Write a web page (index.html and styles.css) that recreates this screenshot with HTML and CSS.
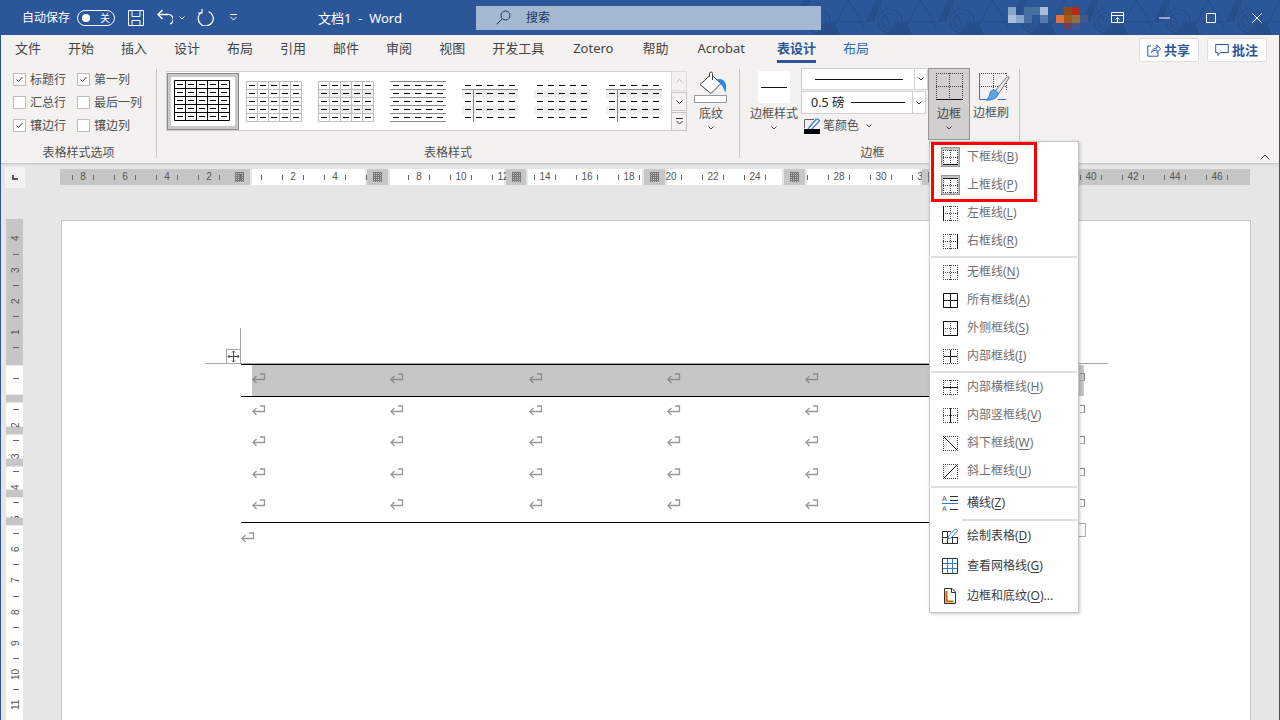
FILE: index.html
```html
<!DOCTYPE html>
<html lang="zh-CN">
<head>
<meta charset="utf-8">
<title>文档1 - Word</title>
<link rel="stylesheet" href="styles.css">
</head>
<body>
<svg class="defs" aria-hidden="true">
  <defs>
    <path id="b-rect" class="dots" d="M0 .5H15M0 14.5H15M.5 0V15M14.5 0V15"/>
    <path id="b-base" class="dots" d="M0 .5H15M0 14.5H15M0 7.5H15M.5 0V15M14.5 0V15M7.5 0V15"/>
    <path id="b-big" class="dots" d="M0 .5H27M0 13.5H27M.5 0V27M13.5 0V27M26.5 0V27"/>
    <path id="t-dash" class="t-dash" d="M3 4.5H55M3 12.5H55M3 20.5H55M3 28.5H55M3 36.5H55"/>
    <path id="t-grid" d="M.5 .5H55.5V40.5H.5ZM11.5 0V41M22.5 0V41M33.5 0V41M44.5 0V41M0 8.5H56M0 16.5H56M0 24.5H56M0 32.5H56"/>
    <path id="t-band" class="t-band" d="M0 8.5H56V16.5H0ZM0 24.5H56V32.5H0Z"/>
    <g id="ret"><path d="M8 1H12.5V6.5H1"/><path d="M4.5 3L1 6.5L4.5 10"/></g>
    <path id="chev" d="M.5 .5L3 3L5.5 .5"/>
    <pattern id="tile" width="72" height="35" patternUnits="userSpaceOnUse">
      <path class="pat-f" d="M14 0H20L13 22H3ZM34 22H44L50 35H26Z"/>
      <circle class="pat-l" cx="28" cy="21" r="8"/>
      <circle class="pat-l" cx="28" cy="21" r="12"/>
      <path class="pat-l" d="M14 0L34 35M58 0L40 35M44 22H72M0 22H3M58 0L72 22M3 22L-4 35"/>
    </pattern>
  </defs>
</svg>

<div class="app">
  <header class="titlebar">
    <svg class="pattern"><rect width="510" height="35" fill="url(#tile)"/></svg>
    <span class="autosave">自动保存</span>
    <span class="toggle"><i class="knob"></i><span class="toggle-t">关</span></span>
    <svg class="ti i-save" viewBox="0 0 16 16"><path d="M.5 .5H15.5V15.5H.5ZM4 .5V6.5H12V.5M4 15.5V10.5H12V15.5"/></svg>
    <svg class="ti i-undo" viewBox="0 0 16 17"><path d="M5.5 1L1 5.5L5.5 10M1 5.5H10A5 5 0 0 1 13 15"/></svg>
    <svg class="ti i-chev1" viewBox="0 0 6 4"><use href="#chev"/></svg>
    <svg class="ti i-redo" viewBox="0 0 17 17"><path d="M5 3A7.5 7.5 0 1 0 11.5 2.500M5 0V4H1"/></svg>
    <svg class="ti i-cust" viewBox="0 0 7 7"><path d="M0 .5H7M.5 3L3.5 6L6.5 3"/></svg>
    <span class="doc-title">文档1  -  Word</span>
    <div class="search">
      <svg class="i-search" viewBox="0 0 15 15"><circle cx="9.5" cy="5.5" r="4.5"/><path d="M6 9L.8 14.2"/></svg>
      <span>搜索</span>
    </div>
    <svg class="mosaic" viewBox="0 0 80 22">
      <rect class="m1" x="0" y="0" width="8" height="8"/><rect class="m2" x="16" y="0" width="16" height="8"/><rect class="m3" x="32" y="0" width="8" height="8"/>
      <rect class="m3" x="0" y="8" width="8" height="8"/><rect class="m1" x="8" y="8" width="8" height="8"/><rect class="m2" x="16" y="8" width="8" height="8"/><rect class="m4" x="32" y="8" width="8" height="8"/>
      <rect class="m5" x="56" y="0" width="8" height="8"/><rect class="m6" x="64" y="0" width="8" height="8"/>
      <rect class="m7" x="48" y="8" width="8" height="8"/><rect class="m8" x="56" y="8" width="8" height="8"/><rect class="m9" x="64" y="8" width="8" height="8"/><rect class="m10" x="72" y="8" width="8" height="8"/>
      <rect class="m11" x="56" y="16" width="8" height="6"/><rect class="m10" x="64" y="16" width="8" height="6"/>
    </svg>
    <svg class="ti i-ropt" viewBox="0 0 14 12"><path d="M.5 .5H12.5V10.5H.5ZM.5 3.5H12.5M6.5 10V5.5M4.5 7.5L6.5 5.5L8.5 7.5"/></svg>
    <svg class="ti i-min" viewBox="0 0 11 2"><path d="M0 1H11"/></svg>
    <svg class="ti i-max" viewBox="0 0 10 10"><path d="M.5 .5H9.5V9.5H.5Z"/></svg>
    <svg class="ti i-close" viewBox="0 0 10 10"><path d="M.3 .3L9.7 9.7M9.7 .3L.3 9.7"/></svg>
  </header>

  <section class="ribbon">
    <nav class="tabs">
      <span>文件</span><span>开始</span><span>插入</span><span>设计</span><span>布局</span><span>引用</span><span>邮件</span><span>审阅</span><span>视图</span><span>开发工具</span><span class="tab-l">Zotero</span><span>帮助</span><span class="tab-l">Acrobat</span><span class="tab-on">表设计</span><span class="tab-ctx">布局</span>
      <div class="shares">
        <button class="share"><svg viewBox="0 0 14 14"><path d="M4 3H.8V13.2H11V9M4.5 9.5C5 6.5 7 5 10 5V2L13.5 5.8L10 9.5V7C8 7 6 7.5 4.5 9.5Z"/></svg>共享</button>
        <button class="share"><svg viewBox="0 0 14 14"><path d="M.7 1.5H13.3V9.5H5.5L3 12.5V9.5H.7Z"/></svg>批注</button>
      </div>
    </nav>

    <div class="rbody">
      <div class="group g-opts">
        <div class="opts">
          <label class="opt"><i class="cb"><svg viewBox="0 0 11 11"><path d="M2.5 5.5L4.5 7.5L8.5 3"/></svg></i>标题行</label>
          <label class="opt"><i class="cb"><svg viewBox="0 0 11 11"><path d="M2.5 5.5L4.5 7.5L8.5 3"/></svg></i>第一列</label>
          <label class="opt"><i class="cb"></i>汇总行</label>
          <label class="opt"><i class="cb"></i>最后一列</label>
          <label class="opt"><i class="cb"><svg viewBox="0 0 11 11"><path d="M2.5 5.5L4.5 7.5L8.5 3"/></svg></i>镶边行</label>
          <label class="opt"><i class="cb"></i>镶边列</label>
        </div>
        <div class="glabel">表格样式选项</div>
      </div>
      <i class="sep"></i>

      <div class="group g-styles">
        <div class="gbody">
          <div class="gallery">
            <div class="thumbs">
              <div class="thumb sel"><svg viewBox="0 0 56 41"><use href="#t-grid" class="tk"/><use href="#t-dash"/></svg></div>
              <div class="thumb"><svg viewBox="0 0 56 41"><use href="#t-grid" class="tg"/><use href="#t-dash"/></svg></div>
              <div class="thumb"><svg viewBox="0 0 56 41"><use href="#t-band"/><use href="#t-grid" class="tg"/><use href="#t-dash"/></svg></div>
              <div class="thumb"><svg viewBox="0 0 56 41"><path class="tl" d="M0 .5H56M0 8.5H56M0 16.5H56M0 24.5H56M0 32.5H56M0 40.5H56"/><use href="#t-dash"/></svg></div>
              <div class="thumb"><svg viewBox="0 0 56 41"><use href="#t-band"/><path class="tl" d="M0 8.5H56M11.5 8V41"/><use href="#t-dash"/></svg></div>
              <div class="thumb"><svg viewBox="0 0 56 41"><use href="#t-band"/><use href="#t-dash"/></svg></div>
              <div class="thumb"><svg viewBox="0 0 56 41"><use href="#t-band"/><path class="tl" d="M0 8.5H56M11.5 8V41"/><use href="#t-dash"/></svg></div>
            </div>
            <div class="gscroll">
              <span class="gs gs-up"><svg viewBox="0 0 7 4"><path d="M.5 3.5L3.5 .5L6.5 3.5"/></svg></span>
              <span class="gs gs-mid"><svg viewBox="0 0 7 4"><path d="M.5 .5L3.5 3.5L6.5 .5"/></svg></span>
              <span class="gs gs-low"><svg viewBox="0 0 7 7"><path d="M0 .5H7M.5 3L3.5 6L6.5 3"/></svg></span>
            </div>
          </div>
          <div class="rbtn btn-shade">
            <svg class="i-shade" viewBox="0 0 34 33">
              <path class="bk" d="M6 13.5L17 3.5L27 12.5L17 22.5Z"/>
              <path class="bk" d="M15.5 6V2.5A1.5 1.5 0 0 1 18.5 2.5V9"/>
              <path class="dr" d="M23 8.5C27 7 29 8.5 30.5 10.5C32.5 13 32.5 17 31.5 21.5C29.5 18 29 15 27 13.5L25 11Z"/>
              <rect class="bar" x=".5" y="24.5" width="32" height="7"/>
            </svg>
            <span class="rlabel">底纹</span>
            <svg class="rchev" viewBox="0 0 6 4"><use href="#chev"/></svg>
          </div>
        </div>
        <div class="glabel">表格样式</div>
      </div>
      <i class="sep"></i>

      <div class="group g-borders">
        <div class="gbody">
          <div class="rbtn btn-bstyle">
            <span class="bsbox"><i class="bsline"></i></span>
            <span class="rlabel">边框样式</span>
            <svg class="rchev" viewBox="0 0 6 4"><use href="#chev"/></svg>
          </div>
          <div class="combos">
            <div class="combo c1"><span class="cval"><i class="cline l1"></i></span><span class="cdrop"><svg viewBox="0 0 6 4"><use href="#chev"/></svg></span></div>
            <div class="combo c2"><span class="cval"><span class="cnum">0.5 磅</span><i class="cline l2"></i></span><span class="cdrop"><svg viewBox="0 0 6 4"><use href="#chev"/></svg></span></div>
            <div class="pencolor">
              <svg class="i-pen" viewBox="0 0 16 16"><path class="pf" d="M.5 10V1.5H10"/><path class="pb" d="M5 9.5L12 1.5C13 .5 15 1.5 15.5 3L8 11L4.5 12Z"/><rect x="0" y="11" width="16" height="5"/></svg>
              <span>笔颜色</span>
              <svg class="rchev pchev" viewBox="0 0 6 4"><use href="#chev"/></svg>
            </div>
          </div>
          <div class="rbtn btn-border">
            <svg class="bigi" viewBox="0 0 27 27"><use href="#b-big"/><path class="solid" d="M0 26.5H27"/></svg>
            <span class="rlabel">边框</span>
            <svg class="rchev" viewBox="0 0 6 4"><use href="#chev"/></svg>
          </div>
          <div class="rbtn btn-brush">
            <svg class="i-brush" viewBox="0 0 31 28">
              <path class="dots" d="M2 .5H28M27.5 0V18M14.5 0V26M2 13.5H27"/>
              <path class="bl" d="M.5 0V26.5H8M19 26.5H27"/>
              <path class="hd" d="M16 18L28 4C29 3 30.5 3.500 30 5L20 20L18 21Z"/>
              <path class="br" d="M14 17C17 17 20 19.500 19 22C17 26 11 27.500 7 27C10 25.500 10.500 22 11 20C11.500 18.500 12.500 17.500 14 17Z"/>
            </svg>
            <span class="rlabel">边框刷</span>
          </div>
        </div>
        <div class="glabel glabel-b">边框</div>
      </div>
      <i class="sep"></i>
      <svg class="collapse" viewBox="0 0 10 6"><path d="M.5 5.500L5 1L9.500 5.500"/></svg>
    </div>
  </section>

  <main class="docarea">
    <div class="hrow">
      <div class="corner"><i></i></div>
      <div class="hruler">
        <div class="hbands">
          <div class="hb grey hb-190"><i class="mark-in"></i></div>
          <div class="hb white hb-113"></div>
          <div class="mark m21"></div>
          <div class="hb white hb-114"></div>
          <div class="mark m20"></div>
          <div class="hb white hb-114"></div>
          <div class="mark m21"></div>
          <div class="hb white hb-115"></div>
          <div class="mark m21"></div>
          <div class="hb white hb-113"></div>
          <div class="mark m21"></div>
          <div class="hb grey hb-rest"></div>
        </div>
        <div class="hticks">
          <span>8</span><span>6</span><span>4</span><span>2</span><span></span><span>2</span><span>4</span><span></span><span>8</span><span>10</span><span>12</span><span>14</span><span>16</span><span>18</span><span>20</span><span>22</span><span>24</span><span></span><span>28</span><span>30</span><span>32</span><span></span><span></span><span></span><span>40</span><span>42</span><span>44</span><span>46</span>
        </div>
      </div>
    </div>
    <div class="drow">
      <div class="vruler">
        <div class="vbands">
          <i class="grey v146"></i><i class="white v28"></i><i class="grey v7"></i><i class="white v23"></i><i class="grey v7"></i><i class="white v23"></i><i class="grey v7"></i><i class="white v22"></i><i class="grey v7"></i><i class="white v19"></i><i class="grey v7"></i><i class="white vrest"></i>
        </div>
        <div class="vticks">
          <span><b>4</b></span><span><b>3</b></span><span><b>2</b></span><span><b>1</b></span><span><b></b></span><span><b></b></span><span><b>2</b></span><span><b>3</b></span><span><b>4</b></span><span><b>5</b></span><span><b>6</b></span><span><b>7</b></span><span><b>8</b></span><span><b>9</b></span><span><b>10</b></span><span><b>11</b></span>
        </div>
      </div>
      <div class="page">
        <div class="tbl">
          <i class="guide-v"></i><i class="guide-h"></i>
          <span class="mover"><svg viewBox="0 0 13 13"><path d="M6.500 1V12M1 6.500H12M5 2.500L6.500 1L8 2.500M5 10.500L6.500 12L8 10.500M2.500 5L1 6.500L2.500 8M10.500 5L12 6.500L10.500 8"/></svg></span>
          <div class="row row-head"><div class="cells"><span class="cell"><svg class="ret" viewBox="0 0 14 11"><use href="#ret"/></svg></span><span class="cell"><svg class="ret" viewBox="0 0 14 11"><use href="#ret"/></svg></span><span class="cell"><svg class="ret" viewBox="0 0 14 11"><use href="#ret"/></svg></span><span class="cell"><svg class="ret" viewBox="0 0 14 11"><use href="#ret"/></svg></span><span class="cell"><svg class="ret" viewBox="0 0 14 11"><use href="#ret"/></svg></span><span class="cell"><svg class="ret" viewBox="0 0 14 11"><use href="#ret"/></svg></span><i class="rowend"></i></div></div>
          <div class="row"><div class="cells"><span class="cell"><svg class="ret" viewBox="0 0 14 11"><use href="#ret"/></svg></span><span class="cell"><svg class="ret" viewBox="0 0 14 11"><use href="#ret"/></svg></span><span class="cell"><svg class="ret" viewBox="0 0 14 11"><use href="#ret"/></svg></span><span class="cell"><svg class="ret" viewBox="0 0 14 11"><use href="#ret"/></svg></span><span class="cell"><svg class="ret" viewBox="0 0 14 11"><use href="#ret"/></svg></span><span class="cell"><svg class="ret" viewBox="0 0 14 11"><use href="#ret"/></svg></span><i class="rowend"></i></div></div>
          <div class="row"><div class="cells"><span class="cell"><svg class="ret" viewBox="0 0 14 11"><use href="#ret"/></svg></span><span class="cell"><svg class="ret" viewBox="0 0 14 11"><use href="#ret"/></svg></span><span class="cell"><svg class="ret" viewBox="0 0 14 11"><use href="#ret"/></svg></span><span class="cell"><svg class="ret" viewBox="0 0 14 11"><use href="#ret"/></svg></span><span class="cell"><svg class="ret" viewBox="0 0 14 11"><use href="#ret"/></svg></span><span class="cell"><svg class="ret" viewBox="0 0 14 11"><use href="#ret"/></svg></span><i class="rowend"></i></div></div>
          <div class="row"><div class="cells"><span class="cell"><svg class="ret" viewBox="0 0 14 11"><use href="#ret"/></svg></span><span class="cell"><svg class="ret" viewBox="0 0 14 11"><use href="#ret"/></svg></span><span class="cell"><svg class="ret" viewBox="0 0 14 11"><use href="#ret"/></svg></span><span class="cell"><svg class="ret" viewBox="0 0 14 11"><use href="#ret"/></svg></span><span class="cell"><svg class="ret" viewBox="0 0 14 11"><use href="#ret"/></svg></span><span class="cell"><svg class="ret" viewBox="0 0 14 11"><use href="#ret"/></svg></span><i class="rowend"></i></div></div>
          <div class="row"><div class="cells"><span class="cell"><svg class="ret" viewBox="0 0 14 11"><use href="#ret"/></svg></span><span class="cell"><svg class="ret" viewBox="0 0 14 11"><use href="#ret"/></svg></span><span class="cell"><svg class="ret" viewBox="0 0 14 11"><use href="#ret"/></svg></span><span class="cell"><svg class="ret" viewBox="0 0 14 11"><use href="#ret"/></svg></span><span class="cell"><svg class="ret" viewBox="0 0 14 11"><use href="#ret"/></svg></span><span class="cell"><svg class="ret" viewBox="0 0 14 11"><use href="#ret"/></svg></span><i class="rowend"></i></div></div>
          <i class="resize"></i>
        </div>
        <svg class="ret ret-after" viewBox="0 0 14 11"><use href="#ret"/></svg>
      </div>
    </div>
  </main>

  <div class="menu">
    <div class="mi"><span class="chk"><svg class="bi" viewBox="0 0 15 15"><use href="#b-base"/><path class="solid" d="M0 14.500H15"/></svg></span><span>下框线(<u>B</u>)</span></div>
    <div class="mi"><span class="chk"><svg class="bi" viewBox="0 0 15 15"><use href="#b-base"/><path class="solid" d="M0 .5H15"/></svg></span><span>上框线(<u>P</u>)</span></div>
    <div class="mi"><svg class="bi" viewBox="0 0 15 15"><use href="#b-base"/><path class="solid" d="M.5 0V15"/></svg><span>左框线(<u>L</u>)</span></div>
    <div class="mi"><svg class="bi" viewBox="0 0 15 15"><use href="#b-base"/><path class="solid" d="M14.500 0V15"/></svg><span>右框线(<u>R</u>)</span></div>
    <i class="msep"></i>
    <div class="mi"><svg class="bi" viewBox="0 0 15 15"><use href="#b-base"/></svg><span>无框线(<u>N</u>)</span></div>
    <div class="mi"><svg class="bi" viewBox="0 0 15 15"><path class="solid" d="M.5 .5H14.500V14.500H.5ZM7.500 0V15M0 7.500H15"/></svg><span>所有框线(<u>A</u>)</span></div>
    <div class="mi"><svg class="bi" viewBox="0 0 15 15"><use href="#b-base"/><path class="solid" d="M.5 .5H14.500V14.500H.5Z"/></svg><span>外侧框线(<u>S</u>)</span></div>
    <div class="mi"><svg class="bi" viewBox="0 0 15 15"><use href="#b-rect"/><path class="solid" d="M7.500 1V14M1 7.500H14"/></svg><span>内部框线(<u>I</u>)</span></div>
    <i class="msep"></i>
    <div class="mi"><svg class="bi" viewBox="0 0 15 15"><use href="#b-base"/><path class="solid" d="M1 7.500H14"/></svg><span>内部横框线(<u>H</u>)</span></div>
    <div class="mi"><svg class="bi" viewBox="0 0 15 15"><use href="#b-base"/><path class="solid" d="M7.500 1V14"/></svg><span>内部竖框线(<u>V</u>)</span></div>
    <div class="mi"><svg class="bi" viewBox="0 0 15 15"><use href="#b-rect"/><path class="solid" d="M1 1L14 14"/></svg><span>斜下框线(<u>W</u>)</span></div>
    <div class="mi"><svg class="bi" viewBox="0 0 15 15"><use href="#b-rect"/><path class="solid" d="M1 14L14 1"/></svg><span>斜上框线(<u>U</u>)</span></div>
    <i class="msep"></i>
    <div class="mi tall dark"><svg class="mic" viewBox="0 0 16 16"><text class="tiny" x="0" y="6">A</text><text class="tiny" x="0" y="16">A</text><path class="solid g3" d="M8 1.500H16M8 5.500H16M8 14.500H16"/><path class="blue" d="M0 8.500H16"/></svg><span>横线(<u>Z</u>)</span></div>
    <i class="msep short"></i>
    <div class="mi tall dark"><svg class="mic" viewBox="0 0 16 16"><path class="solid g3" d="M.5 3.500H9M.5 3.500V15.500H15.500V9M.5 9.500H15M5.500 3.500V15.500M10.500 9.500V15.500"/><path class="bfill" d="M6 9L12.500 1.500C13.500 .5 15.500 1.500 15.500 3L9 10L6 10.500Z"/></svg><span>绘制表格(<u>D</u>)</span></div>
    <div class="mi tall dark"><svg class="mic" viewBox="0 0 16 16"><path class="blue" d="M5.500 1V15M10.500 1V15M1 5.500H15M1 10.500H15"/><path class="solid g3" d="M.5 .5H15.500V15.500H.5Z"/></svg><span>查看网格线(<u>G</u>)</span></div>
    <div class="mi tall dark"><svg class="mic" viewBox="0 0 16 16"><path class="solid g3" d="M2.500 .5H10L13.500 4V15.500H2.500ZM9.500 .5V4.500H13.500"/><path class="orange" d="M4.500 3V13.500H11.500"/></svg><span>边框和底纹(<u>O</u>)...</span></div>
  </div>
  <div class="redbox"></div>
</div>
</body>
</html>
```

FILE: styles.css
```css
* { box-sizing: border-box; }
html, body { margin: 0; padding: 0; }
body {
  width: 1280px;
  height: 720px;
  overflow: hidden;
  font-family: "Noto Sans", "Noto Sans CJK SC", "Liberation Sans", sans-serif;
  color: #505050;
}
i { font-style: normal; display: block; }
.defs { position: absolute; width: 0; height: 0; }

.app {
  position: relative;
  width: 1280px;
  height: 720px;
  overflow: hidden;
  display: flex;
  flex-direction: column;
  background: #2b579a;
}

/* title bar */
.titlebar {
  position: relative;
  isolation: isolate;
  flex: none;
  height: 35px;
  display: flex;
  align-items: center;
  padding-left: 22px;
  background: #2b579a;
  color: #fff;
}
.pattern { position: absolute; left: 790px; top: 0; width: 490px; height: 35px; z-index: -1; }
.pat-f { fill: #264d8c; }
.pat-l { fill: none; stroke: #264d8c; stroke-width: 1.2; }
.autosave { font-size: 12px; line-height: 16px; width: 48px; }
.toggle {
  position: relative;
  margin-left: 7px;
  width: 38px;
  height: 16px;
  border: 1px solid #fff;
  border-radius: 8px;
  display: flex;
  align-items: center;
  padding-left: 4px;
}
.knob { width: 8px; height: 8px; border-radius: 50%; background: #fff; }
.toggle-t { margin-left: 10px; font-size: 10px; line-height: 14px; }
.ti { flex: none; fill: none; stroke: #fff; stroke-width: 1; }
.i-save { width: 16px; height: 16px; margin-left: 13px; }
.i-undo { width: 16px; height: 17px; margin-left: 13px; stroke-width: 1.3; }
.i-chev1 { width: 6px; height: 4px; margin-left: 6px; }
.i-redo { width: 17px; height: 17px; margin-left: 12px; stroke-width: 1.2; }
.i-cust { width: 7px; height: 7px; margin-left: 16px; }
.doc-title { margin-left: 81px; width: 85px; font-size: 13px; line-height: 18px; white-space: pre; }
.search {
  margin-left: 73px;
  width: 345px;
  height: 24px;
  background: #a5b8d2;
  display: flex;
  align-items: center;
  padding-left: 20px;
  gap: 15px;
  color: #1c3661;
  font-size: 12px;
  line-height: 16px;
}
.i-search { width: 15px; height: 15px; fill: none; stroke: #1c3661; stroke-width: 1; }
.mosaic { flex: none; width: 80px; height: 22px; margin-left: 187px; }
.m1 { fill: #8aa5cc; } .m2 { fill: #46709f; } .m3 { fill: #a9bedb; } .m4 { fill: #5c7ca8; }
.m5 { fill: #8b4a14; } .m6 { fill: #b52a1a; } .m7 { fill: #e0703c; } .m8 { fill: #a05a18; }
.m9 { fill: #937040; } .m10 { fill: #41568a; } .m11 { fill: #6a4060; }
.i-ropt { width: 14px; height: 12px; margin-left: 23px; }
.i-min { width: 11px; height: 2px; margin-left: 34px; }
.i-max { width: 10px; height: 10px; margin-left: 36px; }
.i-close { width: 10px; height: 10px; margin-left: 36px; }

/* ribbon */
.ribbon {
  position: relative;
  z-index: 1;
  flex: none;
  height: 128px;
  margin: 0 1px;
  background: #f3f2f1;
  box-shadow: 0 1px 2px rgba(0, 0, 0, .18);
  display: flex;
  flex-direction: column;
}
.tabs {
  flex: none;
  height: 29px;
  display: flex;
  align-items: center;
  gap: 27px;
  padding: 0 12px 0 14px;
  font-size: 13px;
  line-height: 19px;
  color: #444;
  white-space: nowrap;
}
.tabs > span { position: relative; top: -1px; }
.tab-l { padding: 0 2px; }
.tab-on { color: #2b579a; font-weight: 700; margin-left: 3px; }
.tab-on::after {
  content: "";
  position: absolute;
  left: 0;
  right: 0;
  top: 21px;
  height: 3px;
  background: #2b579a;
}
.tab-ctx { color: #2b6cb0; }
.shares { margin-left: auto; display: flex; gap: 8px; }
.share {
  width: 60px;
  height: 24px;
  padding: 0 0 0 7px;
  border: 1px solid #e1dfdd;
  border-radius: 2px;
  background: #fff;
  font: 700 13px/18px "Noto Sans CJK SC", sans-serif;
  color: #2b579a;
  display: flex;
  align-items: center;
  gap: 3px;
}
.share svg { width: 14px; height: 14px; fill: none; stroke: #2b579a; stroke-width: 1; flex: none; }

.rbody { flex: 1; display: flex; min-height: 0; }
.sep { flex: none; width: 1px; margin: 5px 0; background: #c8c6c4; }
.group { flex: none; display: flex; flex-direction: column; }
.gbody { flex: 1; display: flex; min-height: 0; }
.glabel { flex: none; height: 16px; margin-bottom: 2px; text-align: center; font-size: 12px; line-height: 16px; color: #505050; }
.glabel-b { padding-right: 14px; }

.g-opts { width: 155px; }
.opts {
  flex: 1;
  display: grid;
  grid-template-columns: 64px 1fr;
  grid-auto-rows: 23px;
  padding: 4px 0 0 12px;
}
.opt { display: flex; align-items: center; gap: 4px; font-size: 12px; line-height: 16px; white-space: nowrap; }
.cb { flex: none; width: 13px; height: 13px; border: 1px solid #bdbdbd; background: #fff; }
.cb svg { display: block; width: 11px; height: 11px; fill: none; stroke: #333; stroke-width: 1; }

.g-styles { width: 582px; }
.g-styles .gbody { padding: 7px 0 0 9px; }
.gallery { flex: none; height: 60px; width: 521px; display: flex; }
.thumbs {
  flex: none;
  width: 506px;
  height: 60px;
  padding: 1px 0 0 0;
  border: 1px solid #d2d0ce;
  background: #fff;
  display: flex;
}
.thumb { flex: none; width: 72px; height: 57px; padding: 8px 0 0 7px; }
.thumb svg { display: block; width: 56px; height: 41px; }
.thumb.sel {
  border: 1px solid #8a8a8a;
  background: #fff;
  box-shadow: inset 0 0 0 3px #c8c8c8;
  padding: 6px 0 0 6px;
}
.t-dash { stroke: #000; stroke-dasharray: 6 5; fill: none; }
.t-band { fill: #eeeeee; }
.tk { fill: none; stroke: #000; }
.tg { fill: none; stroke: #bdbdbd; }
.tl { fill: none; stroke: #8a8a8a; }
.gscroll { flex: none; width: 15px; display: flex; flex-direction: column; gap: 1px; }
.gs { display: flex; align-items: center; justify-content: center; border: 1px solid #c8c6c4; margin-left: -1px; width: 16px; }
.gs svg { fill: none; stroke: #333; stroke-width: 1; width: 7px; }
.gs-up { height: 20px; background: #f3f2f1; border-color: #dcdcdc; }
.gs-up svg { height: 4px; stroke: #bcbcbc; }
.gs-mid { height: 19px; }
.gs-mid svg { height: 4px; }
.gs-low { height: 19px; }
.gs-low svg { height: 7px; }

.rbtn { flex: none; display: flex; flex-direction: column; align-items: center; }
.rlabel { font-size: 12px; line-height: 16px; white-space: nowrap; }
.rchev { width: 6px; height: 4px; margin-top: 4px; fill: none; stroke: #444; stroke-width: 1; }
.btn-shade { width: 44px; margin-left: 2px; }
.i-shade { width: 34px; height: 33px; margin-bottom: 2px; }
.bk { fill: #fff; stroke: #444; stroke-width: 1; }
.dr { fill: #2b88d8; }
.bar { fill: #fff; stroke: #9a9a9a; }

.g-borders { width: 279px; }
.g-borders .gbody { padding: 0 0 0 10px; }
.btn-bstyle { width: 48px; padding-top: 7px; }
.bsbox { width: 32px; height: 32px; background: #fff; display: flex; align-items: center; justify-content: center; margin-bottom: 3px; }
.bsline { width: 26px; height: 1px; background: #111; }
.combos { flex: none; width: 127px; margin-left: 3px; padding-top: 4px; display: flex; flex-direction: column; }
.combo { display: flex; height: 22px; border: 1px solid #d2d0ce; background: #fff; }
.c1 { width: 127px; margin-bottom: 1px; }
.c2 { width: 125px; height: 23px; }
.cval { flex: 1; display: flex; align-items: center; padding-left: 9px; }
.c1 .cval { padding-left: 13px; }
.cnum { font-size: 12.5px; line-height: 16px; color: #222; white-space: nowrap; }
.cline { height: 1px; background: #111; }
.l1 { width: 88px; }
.l2 { width: 54px; margin-left: 7px; }
.cdrop { flex: none; width: 13px; border-left: 1px solid #d2d0ce; display: flex; align-items: center; justify-content: center; }
.cdrop svg { width: 6px; height: 4px; fill: none; stroke: #333; }
.pencolor { display: flex; align-items: center; padding: 4px 0 0 3px; font-size: 12px; line-height: 16px; }
.i-pen { flex: none; width: 16px; height: 16px; margin-right: 3px; }
.i-pen rect { fill: #000; }
.pf { fill: none; stroke: #666; }
.pb { fill: #fff; stroke: #2b7cd3; stroke-width: 1.2; }
.pchev { margin: 0 0 0 7px; }
.btn-border {
  width: 42px;
  height: 72px;
  margin: 4px 0 0 0;
  padding-top: 4px;
  background: #d2d0ce;
  border: 1px solid #979593;
  color: #444;
}
.bigi { width: 27px; height: 27px; margin-bottom: 6px; }
.btn-brush { width: 40px; margin-left: 1px; padding-top: 9px; }
.i-brush { width: 31px; height: 28px; margin-bottom: 4px; margin-left: 6px; }
.dots { fill: none; stroke: #444; stroke-dasharray: 1 1; }
.solid { fill: none; stroke: #111; }
.g3 { stroke: #333; }
.bl { fill: none; stroke: #2b7cd3; }
.hd { fill: #e8e8e8; stroke: #777; }
.br { fill: #5ea5e0; stroke: #2b7cd3; }
.collapse { width: 10px; height: 6px; fill: none; stroke: #444; margin: 90px 0 0 240px; flex: none; }

/* document */
.docarea {
  flex: 1;
  min-height: 0;
  margin: 0 1px;
  background: #e6e6e6;
  display: flex;
  flex-direction: column;
}
.hrow { flex: none; height: 25px; padding: 4px 0 0 4px; display: flex; }
.corner { flex: none; width: 20px; height: 21px; background: #f3f3f3; display: flex; align-items: center; justify-content: center; }
.corner i { width: 6px; height: 5px; border-left: 2px solid #555; border-bottom: 2px solid #555; }
.hruler { position: relative; flex: none; width: 1190px; height: 16px; margin: 2px 0 0 35px; }
.hbands { display: flex; height: 16px; }
.grey { background: #c6c6c6; }
.white { background: #fff; }
.hb { flex: none; height: 16px; }
.hb-190 { width: 190px; margin-right: 2px; position: relative; }
.hb-113 { width: 113px; }
.hb-114 { width: 114px; }
.hb-115 { width: 115px; }
.hb-rest { flex: 1; }
.mark, .mark-in { position: relative; z-index: 2; }
.mark { flex: none; height: 16px; background: #c6c6c6; margin: 0 2px; }
.m21 { width: 21px; }
.m20 { width: 20px; }
.mark::after, .mark-in {
  background-image: linear-gradient(#777 1px, transparent 1px), linear-gradient(90deg, #777 1px, transparent 1px);
  background-size: 2px 2px;
}
.mark::after { content: ""; position: absolute; left: 6px; top: 3px; width: 9px; height: 10px; }
.mark-in { position: absolute; left: 175px; top: 3px; width: 9px; height: 10px; }
.hticks {
  position: absolute;
  left: 2px;
  top: 0;
  display: flex;
  height: 16px;
  font-family: "Liberation Sans", sans-serif;
  font-size: 10px;
  line-height: 16px;
  color: #555;
  z-index: 1;
}
.hticks span {
  flex: none;
  width: 42px;
  padding: 0 10px;
  display: flex;
  align-items: center;
  justify-content: space-between;
}
.hticks span::before, .hticks span::after { content: ""; width: 1px; height: 5px; background: #666; }

.drow { flex: 1; min-height: 0; display: flex; margin-top: 31px; padding-left: 5px; }
.vruler { position: relative; flex: none; width: 17px; margin-top: 0; }
.vbands { display: flex; flex-direction: column; gap: 1px; height: 501px; }
.vbands i { flex: none; }
.v146 { height: 146px; }
.v28 { height: 28px; }
.v7 { height: 7px; position: relative; z-index: 2; }
.v23 { height: 23px; }
.v22 { height: 22px; }
.v19 { height: 19px; }
.vrest { height: 200px; }
.vticks {
  position: absolute;
  left: 0;
  top: 4.45px;
  width: 17px;
  display: flex;
  flex-direction: column;
  font-family: "Liberation Sans", sans-serif;
  font-size: 10px;
  color: #555;
  z-index: 1;
}
.vticks span { flex: none; height: 31.1px; display: flex; flex-direction: column; align-items: center; }
.vticks b { flex: 1; font-weight: 400; display: flex; align-items: center; justify-content: center; line-height: 10px; writing-mode: vertical-rl; transform: rotate(180deg); margin-left: 2px; }
.vticks span::after { content: ""; flex: none; width: 6px; height: 1px; background: #666; margin-left: 2px; }

.page {
  flex: none;
  width: 1190px;
  height: 540px;
  margin: 1px 0 0 38px;
  padding: 143px 0 0 179px;
  background: #fff;
  border: 1px solid #c6c6c6;
}
.tbl {
  position: relative;
  width: 830px;
  height: 159px;
  border-top: 1px solid #000;
  border-bottom: 1px solid #000;
}
.guide-v { position: absolute; left: -1px; top: -37px; width: 1px; height: 36px; background: #a6a6a6; }
.guide-h { position: absolute; left: -36px; top: -2px; width: 903px; height: 1px; background: #a6a6a6; }
.mover {
  position: absolute;
  left: -15px;
  top: -16px;
  width: 15px;
  height: 15px;
  border: 1px solid #a6a6a6;
  background: #fff;
  display: flex;
  align-items: center;
  justify-content: center;
}
.mover svg { width: 13px; height: 13px; fill: none; stroke: #444; stroke-width: 1; }
.row { height: 31.25px; }
.row-head { height: 32px; border-bottom: 1px solid #000; }
.cells { display: flex; margin-left: 11px; width: 832px; height: 100%; align-items: center; }
.row-head .cells { background: #c6c6c6; height: 31px; }
.cell { flex: none; width: 138.25px; display: flex; padding-bottom: 4px; }
.ret { display: block; width: 14px; height: 11px; fill: none; stroke: #999; stroke-width: 1.3; }
.row-head .ret { stroke: #8c8c8c; }
.rowend { flex: none; width: 5px; height: 8px; margin: 0 0 7px -2px; border-top: 1px solid #888; border-right: 1px solid #888; border-bottom: 1px solid #aaa; }
.resize { position: absolute; left: 837px; bottom: -15px; width: 8px; height: 14px; border: 1px solid #aaa; background: #fff; }
.ret-after { margin-top: 9px; }

/* dropdown menu */
.menu {
  position: absolute;
  z-index: 5;
  left: 929px;
  top: 141px;
  width: 150px;
  height: 472px;
  padding: 1px 0;
  background: #fff;
  border: 1px solid #c6c6c6;
  box-shadow: 1px 1px 3px rgba(0, 0, 0, .22);
  font-size: 12px;
  line-height: 16px;
  color: #707070;
}
.mi { height: 28px; display: flex; align-items: center; padding-left: 13px; gap: 9px; white-space: nowrap; }
.mi.tall { height: 30px; }
.mi.dark { color: #3c3c3c; }
.mi u { text-underline-offset: 2px; }
.bi { flex: none; display: block; width: 15px; height: 15px; }
.chk {
  flex: none;
  display: flex;
  width: 19px;
  height: 20px;
  margin: 0 -2px;
  padding: 1.5px 1px;
  background: #c4c4c4;
  border: 1px solid #979593;
}
.chk .bi { background: #fff; }
.msep { height: 2px; margin: 1px 1px 0; background: #dedede; }
.msep.short { margin-left: 32px; }
.mic { flex: none; width: 16px; height: 16px; margin-left: -1px; }
.tiny { font: 7px "Liberation Sans", sans-serif; fill: #555; stroke: none; }
.blue { fill: none; stroke: #2b7cd3; }
.bfill { fill: #fff; stroke: #2b7cd3; }
.orange { fill: none; stroke: #d86a00; stroke-width: 2.2; }

.redbox {
  position: absolute;
  z-index: 6;
  left: 931px;
  top: 142px;
  width: 106px;
  height: 60px;
  border: 3px solid #f00;
}
```
